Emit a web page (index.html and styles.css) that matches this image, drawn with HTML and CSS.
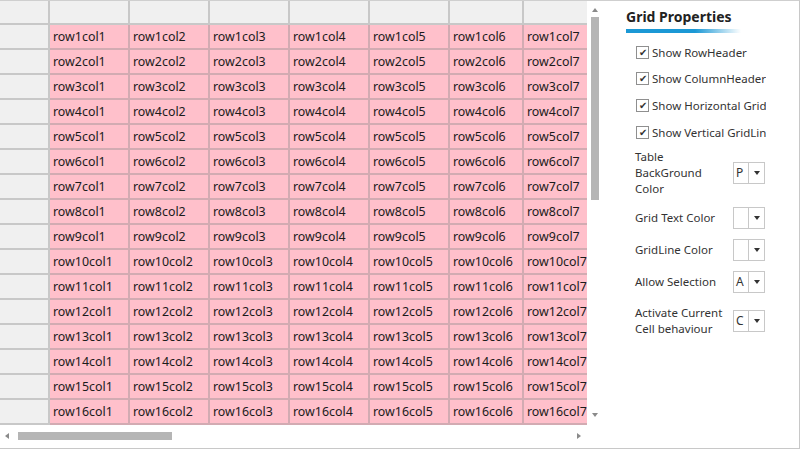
FILE: index.html
```html
<!DOCTYPE html>
<html>
<head>
<meta charset="utf-8">
<link rel="stylesheet" href="styles.css">
</head>
<body>
<div class="app">
  <div class="grid-pane">
    <div class="viewport">
      <div class="grid" id="grid"></div>
    </div>
    <div class="vscroll">
      <span class="arrow up"></span>
      <span class="vthumb"></span>
      <span class="arrow down"></span>
    </div>
    <div class="hscroll">
      <span class="arrow left"></span>
      <span class="hthumb"></span>
      <span class="arrow right"></span>
    </div>
    <div class="corner"></div>
  </div>
  <div class="panel">
    <div class="title">Grid Properties</div>
    <div class="title-bar"></div>
    <div class="checks">
      <label class="check"><span class="box">✔</span><span class="clip">Show RowHeader</span></label>
      <label class="check"><span class="box">✔</span><span class="clip">Show ColumnHeader</span></label>
      <label class="check"><span class="box">✔</span><span class="clip">Show Horizontal Grid</span></label>
      <label class="check"><span class="box">✔</span><span class="clip">Show Vertical GridLin</span></label>
    </div>
    <div class="props">
      <div class="prop p3"><span class="plabel">Table BackGround Color</span><span class="combo"><span class="val">P</span><span class="drop"></span></span></div>
      <div class="prop"><span class="plabel">Grid Text Color</span><span class="combo"><span class="val"></span><span class="drop"></span></span></div>
      <div class="prop"><span class="plabel">GridLine Color</span><span class="combo"><span class="val"></span><span class="drop"></span></span></div>
      <div class="prop p4"><span class="plabel">Allow Selection</span><span class="combo"><span class="val">A</span><span class="drop"></span></span></div>
      <div class="prop"><span class="plabel">Activate Current Cell behaviour</span><span class="combo"><span class="val">C</span><span class="drop"></span></span></div>
    </div>
  </div>
</div>
<script>
  var g = document.getElementById('grid');
  var html = '<div class="hcell rh"></div>';
  for (var c = 1; c <= 7; c++) html += '<div class="hcell"></div>';
  for (var r = 1; r <= 16; r++) {
    html += '<div class="hcell rh"></div>';
    for (var c = 1; c <= 7; c++) html += '<div class="cell">row' + r + 'col' + c + '</div>';
  }
  g.innerHTML = html;
</script>
</body>
</html>
```

FILE: styles.css
```css
* { box-sizing: border-box; }
html, body { margin: 0; padding: 0; background: #fff; }
body { font-family: "Noto Sans", "Open Sans", sans-serif; color: #222; }

.app {
  width: 800px;
  height: 449px;
  display: flex;
  border-top: 1px solid #cfcfcf;
  border-right: 1px solid #c8c8c8;
  border-bottom: 1px solid #c8c8c8;
  overflow: hidden;
}

.grid-pane {
  width: 600px;
  flex: none;
  display: grid;
  grid-template-columns: 587px 13px;
  grid-template-rows: 424px 23px;
}

.viewport { overflow: hidden; position: relative; }
.grid {
  display: grid;
  grid-template-columns: 50px repeat(5, 80px) 74px 80px;
  grid-auto-rows: 25px;
  width: 610px;
  margin-top: -1px;
}
.hcell {
  background: #f0f0f0;
  border-right: 2px solid #c8c8c8;
  border-bottom: 2px solid #c8c8c8;
}
.cell {
  background: #ffc0cb;
  border-right: 2px solid #d2abb2;
  border-bottom: 2px solid #d2abb2;
  font-size: 12.4px;
  line-height: 24px;
  padding-left: 3px;
  white-space: nowrap;
  overflow: hidden;
  color: #1b1b1b;
}

.vscroll {
  display: flex;
  flex-direction: column;
  align-items: center;
  padding-left: 3px;
}
.vthumb {
  width: 8px;
  height: 183px;
  background: #b5b5b5;
  margin-top: 5px;
}
.vscroll .down { margin-top: auto; margin-bottom: 8px; }
.vscroll .up { margin-top: 7px; }

.hscroll {
  display: flex;
  align-items: center;
  padding: 0 0 2px 5px;
}
.hthumb {
  width: 154px;
  height: 8px;
  background: #b5b5b5;
  margin-left: 9px;
}
.hscroll .right { margin-left: auto; margin-right: 6px; }

.arrow { width: 0; height: 0; border-style: solid; display: block; }
.up { border-width: 0 3px 4px 3px; border-color: transparent transparent #8a8a8a transparent; }
.down { border-width: 4px 3px 0 3px; border-color: #8a8a8a transparent transparent transparent; }
.left { border-width: 3px 4px 3px 0; border-color: transparent #8a8a8a transparent transparent; }
.right { border-width: 3px 0 3px 4px; border-color: transparent transparent transparent #8a8a8a; }

.panel {
  flex: 1;
  padding: 7px 0 0 26px;
  font-size: 11.5px;
  color: #333;
}
.title {
  font-weight: bold;
  font-size: 14px;
  color: #222;
  line-height: 18px;
}
.title-bar {
  width: 115px;
  height: 4px;
  margin-top: 3px;
  background: linear-gradient(to right, #1b98d5 0%, #1b98d5 60%, #ffffff 100%);
}
.checks { margin-top: 6px; padding-left: 10px; }
.check {
  display: flex;
  align-items: center;
  height: 26.6px;
}
.box {
  width: 13px;
  height: 13px;
  border: 1px solid #8f8f8f;
  font-size: 10px;
  line-height: 11px;
  text-align: center;
  color: #333;
  margin-right: 3px;
  flex: none;
}
.clip {
  display: block;
  width: 114px;
  overflow: hidden;
  white-space: nowrap;
}

.props { padding-left: 9px; margin-top: 4px; }
.prop {
  display: flex;
  align-items: center;
  width: 130px;
  justify-content: space-between;
  min-height: 22px;
  margin-bottom: 10px;
}
.plabel { width: 92px; line-height: 16px; }
.p3 { margin-bottom: 10px; }
.p4 { margin-bottom: 12px; }
.combo {
  width: 32px;
  height: 22px;
  border: 1px solid #c8c8c8;
  display: flex;
  background: #fff;
}
.val {
  width: 15px;
  border-right: 1px solid #c8c8c8;
  line-height: 20px;
  padding-left: 2px;
  font-size: 12px;
  overflow: hidden;
}
.drop {
  flex: 1;
  display: flex;
  align-items: center;
  justify-content: center;
}
.drop::after {
  content: "";
  border-style: solid;
  border-width: 4px 3.5px 0 3.5px;
  border-color: #333 transparent transparent transparent;
}
```
